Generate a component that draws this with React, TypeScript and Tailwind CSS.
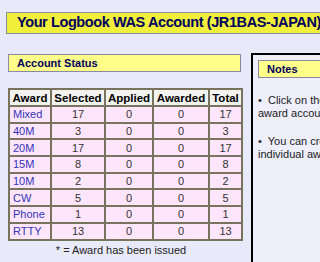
const rows = [
  { award: 'Mixed', selected: 17, applied: 0, awarded: 0, total: 17 },
  { award: '40M', selected: 3, applied: 0, awarded: 0, total: 3 },
  { award: '20M', selected: 17, applied: 0, awarded: 0, total: 17 },
  { award: '15M', selected: 8, applied: 0, awarded: 0, total: 8 },
  { award: '10M', selected: 2, applied: 0, awarded: 0, total: 2 },
  { award: 'CW', selected: 5, applied: 0, awarded: 0, total: 5 },
  { award: 'Phone', selected: 1, applied: 0, awarded: 0, total: 1 },
  { award: 'RTTY', selected: 13, applied: 0, awarded: 0, total: 13 },
]

const cell = 'border-2 border-[#77735d] p-0 text-center leading-[12px]'

export default function App() {
  return (
    <div className="h-[262px] w-[320px] overflow-hidden bg-[#e9eaf9] font-['Liberation_Sans',Arial,sans-serif]">
      <div className="w-[380px] pl-[6px] pt-[12px]">
        <div className="flex h-[22px] w-[340px] items-center border border-[#8a8aa0] bg-[#f0ef3c] pl-[10px] text-[14.5px] font-bold tracking-[-0.4px] text-[#00005e]">
          Your Logbook WAS Account (JR1BAS-JAPAN)
        </div>

        <div className="mt-[19px] flex items-start">
          {/* account status column */}
          <div className="ml-[2px] w-[233px] shrink-0">
            <div className="mt-[1px] flex h-[18px] items-center border border-[#8a8aa0] bg-[#ffff8a] pl-[8px] text-[11px] font-bold text-[#00005e]">
              Account Status
            </div>

            <table className="mt-[16px] w-[233px] table-fixed border-collapse text-[11.5px]">
              <colgroup>
                <col className="w-[42px]" />
                <col className="w-[54px]" />
                <col className="w-[48px]" />
                <col className="w-[56px]" />
                <col className="w-[33px]" />
              </colgroup>
              <thead>
                <tr className="h-[17px] bg-[#f3f3ef] font-bold text-black">
                  <th className={cell}>Award</th>
                  <th className={cell}>Selected</th>
                  <th className={cell}>Applied</th>
                  <th className={cell}>Awarded</th>
                  <th className={cell}>Total</th>
                </tr>
              </thead>
              <tbody className="text-[11px] text-[#333]">
                {rows.map((r) => (
                  <tr key={r.award} className="h-[16.7px] bg-[#fde5fb]">
                    <td className={`${cell} pl-[3px] text-left text-[#3434b8]`}>{r.award}</td>
                    <td className={cell}>{r.selected}</td>
                    <td className={cell}>{r.applied}</td>
                    <td className={cell}>{r.awarded}</td>
                    <td className={cell}>{r.total}</td>
                  </tr>
                ))}
              </tbody>
            </table>
            <p className="mt-[1px] pr-[7px] text-center text-[11px] text-[#222]">
              * = Award has been issued
            </p>
          </div>

          {/* notes column */}
          <div className="ml-[10px] h-[240px] w-[130px] shrink-0 border-2 border-black bg-[#eeeffb] px-[5px] pt-[5px]">
            <div className="flex h-[18px] items-center border border-[#8a8aa0] bg-[#ffff8a] pl-[8px] text-[11px] font-bold text-[#00005e]">
              Notes
            </div>
            <p className="mt-[16px] whitespace-nowrap text-[11px] leading-[13px] text-[#222]">
              •&nbsp; Click on the award names
              <br />
              award account details.
            </p>
            <p className="mt-[15px] whitespace-nowrap text-[11px] leading-[13px] text-[#222]">
              •&nbsp; You can create an
              <br />
              individual award application.
            </p>
          </div>
        </div>
      </div>
    </div>
  )
}
